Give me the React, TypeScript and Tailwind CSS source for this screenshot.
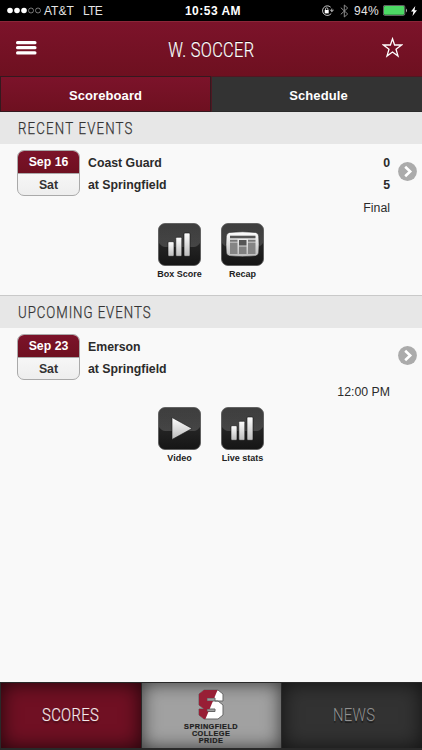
import type { ReactNode } from "react";

function StatusBar() {
  return (
    <div className="relative flex h-[21px] shrink-0 items-center bg-black text-[12px] leading-[21px] text-white">
      <svg className="ml-[7px]" width="35" height="7" viewBox="0 0 35 7">
        <g fill="#fff">
          <circle cx="3" cy="3.5" r="2.8" />
          <circle cx="10" cy="3.5" r="2.8" />
          <circle cx="17" cy="3.5" r="2.8" />
        </g>
        <g fill="none" stroke="#aaa" strokeWidth="0.7">
          <circle cx="24" cy="3.5" r="2.5" />
          <circle cx="31" cy="3.5" r="2.5" />
        </g>
      </svg>
      <span className="ml-[2px] mt-[2px] w-[39px] text-[12px] whitespace-nowrap text-[#e4e4e4]">AT&amp;T</span>
      <span className="mt-[2px] text-[12px] tracking-[-0.7px] text-[#e4e4e4]">LTE</span>
      <span className="absolute inset-x-0 top-[1px] pl-[4px] text-center text-[12px] font-semibold tracking-[0.5px]">10:53 AM</span>
      <div className="ml-auto flex items-center">
        <svg width="13" height="12" viewBox="0 0 13 12" fill="none" stroke="#ddd">
          <path d="M9.7 2.2A4.8 4.8 0 1 0 10.3 8.4M10.8 3.6v2.6M9.2 4.7l1.7 2 1.7-2" strokeWidth="0.9" />
          <rect x="3.7" y="5" width="4" height="3.4" fill="#fff" stroke="none" />
          <path d="M4.5 5V4a1.2 1.2 0 0 1 2.4 0v1" strokeWidth="0.8" />
        </svg>
        <svg className="ml-[6px]" width="9" height="14" viewBox="0 0 9 14" fill="none" stroke="#8b8b8b" strokeWidth="1">
          <path d="M0.8 3.7 7.7 10 4.3 13V1l3.4 3L0.8 10.3" />
        </svg>
        <span className="ml-[5px] mt-[2px] w-[29px] text-[12px] tracking-[0.3px] text-[#e4e4e4]">94%</span>
        <svg width="25" height="11" viewBox="0 0 25 11">
          <rect x="0.4" y="0.4" width="21.4" height="10" rx="1.5" fill="none" stroke="#999" strokeWidth="0.7" />
          <rect x="1" y="1" width="20.2" height="8.8" rx="1" fill="#4cd964" />
          <path d="M23 3.5q2 2 0 4z" fill="#bbb" />
        </svg>
        <svg className="mr-[5px] ml-[3px]" width="6" height="10" viewBox="0 0 6 10">
          <path d="M4.3 0 0 5.6h2.4L1.5 10 6 4.2H3.5z" fill="#fff" />
        </svg>
      </div>
    </div>
  );
}

function Header() {
  return (
    <header className="flex h-[55px] shrink-0 items-center justify-between border-t border-[#8b2638] bg-linear-to-b from-[#7c132a] to-[#6e1020] pr-[19px] pl-[16px]">
      <svg className="mt-[-3px]" width="21" height="14" viewBox="0 0 21 14" fill="#fff">
        <rect width="20.5" height="3.2" rx="1.5" />
        <rect y="5.1" width="20.5" height="3.2" rx="1.5" />
        <rect y="10.2" width="20.5" height="3.2" rx="1.5" />
      </svg>
      <h1 className="mt-[2px] ml-[3px] origin-center scale-x-[0.78] font-['Roboto'] text-[21px] leading-none font-light tracking-[0.4px] text-white [-webkit-text-stroke:0.2px_#fff] [text-shadow:0_-1px_0_#0008]">
        W. SOCCER
      </h1>
      <svg className="mt-[-4px]" width="21" height="21" viewBox="0 0 21 21" fill="none" stroke="#fff" strokeWidth="1.3">
        <path d="M10.5 1.8 12.6 8h7l-5.6 4.3 2 6.8-5.5-4.1L5 19.1l2-6.800L1.400 8h7z" />
      </svg>
    </header>
  );
}

function Tabs() {
  return (
    <div className="flex h-9 shrink-0 text-[13px] font-bold tracking-[0.1px] text-white [text-shadow:0_1px_1px_#000]">
      <button className="w-[211px] border border-[#34191f] bg-linear-to-b from-[#7c132a] to-[#6e1020] pt-[3px]">Scoreboard</button>
      <button className="flex-1 border-t border-b border-l border-[#501722] border-b-[#2b2b2b] bg-[#333] pt-[3px] pl-[3px]">Schedule</button>
    </div>
  );
}

function SectionTitle({ children, spacing }: { children: string; spacing: string }) {
  return (
    <div className="flex h-8 shrink-0 items-center bg-[#e7e7e7] pl-[18px] text-[#333]">
      <h2
        className={`origin-left scale-x-[0.78] font-['Roboto'] text-[17px] leading-none font-light whitespace-nowrap [-webkit-text-stroke:0.25px_#333] ${spacing}`}
      >
        {children}
      </h2>
    </div>
  );
}

function DateBadge({ date }: { date: string }) {
  return (
    <div className="h-[46px] w-[63px] shrink-0 overflow-hidden rounded-[7px] border border-[#aaa] bg-linear-to-b from-white to-[#eee] text-center text-[12.3px] font-bold text-[#333]">
      <div className="h-[22px] bg-linear-to-b from-[#7c132a] to-[#6e1020] leading-[23px] text-white">{date}</div>
      <div className="border-t border-[#aaa] leading-[22px]">Sat</div>
    </div>
  );
}

function Chevron() {
  return (
    <svg className="mt-[12px] shrink-0" width="19" height="19" viewBox="0 0 19 19">
      <circle cx="9.5" cy="9.5" r="9.4" fill="#ababab" />
      <path d="m7.2 4.7 5 4.8-5 4.8" fill="none" stroke="#fff" strokeWidth="2.6" />
    </svg>
  );
}

function Glyph({ kind }: { kind: "bars" | "news" | "play" }) {
  if (kind === "bars")
    return (
      <g fill="url(#silver)" stroke="#111" strokeWidth="0.6">
        <rect x="10" y="18.7" width="6" height="14.6" rx="1" />
        <rect x="17.8" y="14.3" width="6" height="19" rx="1" />
        <rect x="26" y="10" width="6" height="23.3" rx="1" />
      </g>
    );
  if (kind === "play") return <path d="M14 10.5v22l20-11z" fill="url(#silver)" stroke="#151515" strokeWidth="0.6" />;
  return (
    <g>
      <path
        d="M8.5 9.500q13-1.400 26 0 3 .5 3.200 3.800.6 8 0 16-.3 3.300-3.200 3.700-13 1.400-26 0-3-.4-3.200-3.700-.6-8 0-16 .3-3.300 3.200-3.800"
        fill="url(#silver)"
        stroke="#111"
        strokeWidth="0.5"
      />
      <path d="M9 12.700h25.500v2.600H9z" fill="#555" />
      <path d="M9 16.700h7.500v2H9zM27 16.700h7.500v2H27z" fill="#777" />
      <path d="M9 19.500h7.500V31H9zM27 19.500h7.500V31H27z" fill="#858585" />
      <path d="M18 17h7.500v5.500H18z" fill="#555" />
      <path d="M18 23.500h7.500V31H18z" fill="#808080" />
    </g>
  );
}

function IconButton({ kind, label }: { kind: "bars" | "news" | "play"; label: string }) {
  return (
    <button className="flex w-[63px] flex-col items-center">
      <svg width="43" height="43" viewBox="0 0 43 43">
        <defs>
          <linearGradient id="silver" x1="0" y1="0" x2="0" y2="1">
            <stop offset="0" stopColor="#fff" />
            <stop offset="1" stopColor="#bbb" />
          </linearGradient>
          <linearGradient id="dark" x1="0" y1="0" x2="0" y2="1">
            <stop offset="0" stopColor="#3b3b3b" />
            <stop offset="0.55" stopColor="#232323" />
            <stop offset="1" stopColor="#151515" />
          </linearGradient>
          <linearGradient id="gloss" x1="0" y1="0" x2="0" y2="1">
            <stop offset="0" stopColor="#fff" stopOpacity="0.02" />
            <stop offset="1" stopColor="#fff" stopOpacity="0.16" />
          </linearGradient>
        </defs>
        <rect x="0.5" y="0.5" width="42" height="42" rx="6.5" fill="url(#dark)" stroke="#555" strokeWidth="0.8" />
        <path d="M1 20V7q0-6 6-6h29q6 0 6 6v13q-3 4-6 4H7q-3 0-6-4" fill="url(#gloss)" />
        <Glyph kind={kind} />
      </svg>
      <span className="text-[9px] leading-[16px] font-bold whitespace-nowrap text-[#222]">{label}</span>
    </button>
  );
}

interface EventProps {
  date: string;
  away: string;
  scores?: [string, string];
  status: string;
  children: ReactNode;
}

function EventCard({ date, away, scores, status, children }: EventProps) {
  return (
    <article className="h-[151px] shrink-0 pt-[6px]">
      <div className="flex h-[73px] pr-[5px] pl-[17px] text-[12.3px] leading-[22px] text-[#2b2b2b]">
        <DateBadge date={date} />
        <div className="ml-[8px] pt-[2px] font-bold">
          <p>{away}</p>
          <p>at Springfield</p>
        </div>
        <div className="mr-[8px] ml-auto pt-[2px] text-right">
          <p className="h-[22px] font-bold">{scores?.[0]}</p>
          <p className="h-[23px] font-bold">{scores?.[1]}</p>
          <p className="text-[12.3px]">{status}</p>
        </div>
        <Chevron />
      </div>
      <div className="flex justify-center">{children}</div>
    </article>
  );
}

function BottomNav() {
  return (
    <nav className="mt-auto flex h-[68px] shrink-0 gap-px border-y border-b-2 border-[#292929] bg-[#292929] pl-[1px] text-center">
      <button className="w-[140px] bg-[#701023] pt-[1px] shadow-[inset_0_0_20px_#000b]">
        <span className="inline-block scale-x-[0.78] font-['Roboto'] text-[19px] leading-none font-light tracking-[0.4px] text-[#f4e8ea] [-webkit-text-stroke:0.2px_#f4e8ea] [text-shadow:0_2px_2px_#0007]">
          SCORES
        </span>
      </button>
      <button className="flex w-[139px] flex-col items-center bg-[#a1a1a1] pt-[6px] shadow-[inset_0_0_18px_#000a]">
        <svg className="mr-[1px]" width="26" height="31" viewBox="0 0 26 31">
          <defs>
            <clipPath id="upper">
              <path d="M0 0h20L7 31H0z" />
            </clipPath>
          </defs>
          <path d="M6 1h14l5 4v7h-8V9H9v3h11l5 4v10l-5 4H6l-5-4v-6h8v2.500h8V20H6l-5-4V5z" fill="#fff" stroke="#666" strokeWidth="1" />
          <path d="M6 1h14l5 4v7h-8V9H9v3h11l5 4v10l-5 4H6l-5-4v-6h8v2.500h8V20H6l-5-4V5z" fill="#981f36" clipPath="url(#upper)" />
        </svg>
        <span className="mt-[3px] scale-x-[1.12] text-[6.500px] leading-[7px] font-bold tracking-[0.4px] text-[#1d1d1d] [-webkit-text-stroke:0.2px_#1d1d1d]">
          SPRINGFIELD
          <br />
          COLLEGE
          <br />
          PRIDE
        </span>
      </button>
      <button className="flex-1 bg-[#323232] pt-[1px] pl-[4px] shadow-[inset_0_0_20px_#000a]">
        <span className="inline-block scale-x-[0.78] font-['Roboto'] text-[19px] leading-none font-light tracking-[0.4px] text-[#929292] [text-shadow:0_2px_1px_#0007]">
          NEWS
        </span>
      </button>
    </nav>
  );
}

export default function App() {
  return (
    <div className="flex h-[750px] w-[422px] flex-col overflow-hidden bg-[#f9f9f9] font-['Liberation_Sans',Arial,sans-serif]">
      <StatusBar />
      <Header />
      <Tabs />
      <SectionTitle spacing="tracking-[1.500px]">RECENT EVENTS</SectionTitle>
      <EventCard date="Sep 16" away="Coast Guard" scores={["0", "5"]} status="Final">
        <IconButton kind="bars" label="Box Score" />
        <IconButton kind="news" label="Recap" />
      </EventCard>
      <div className="-mb-px h-[2px] shrink-0 bg-[#c9c9c9]" />
      <SectionTitle spacing="tracking-[1.200px]">UPCOMING EVENTS</SectionTitle>
      <EventCard date="Sep 23" away="Emerson" status="12:00 PM">
        <IconButton kind="play" label="Video" />
        <IconButton kind="bars" label="Live stats" />
      </EventCard>
      <BottomNav />
    </div>
  );
}
